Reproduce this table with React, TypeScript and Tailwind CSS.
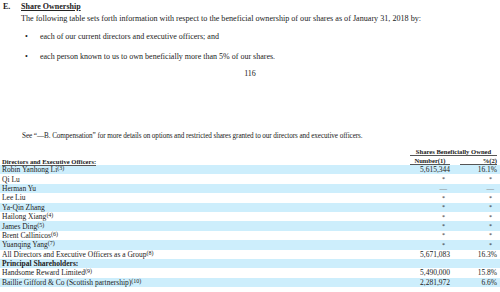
import React from "react";

interface Holder {
  name: string;
  note?: string;
  number: string;
  percent: string;
  bold?: boolean;
}

const holders: Holder[] = [
  { name: "Robin Yanhong Li", note: "(3)", number: "5,615,344", percent: "16.1%" },
  { name: "Qi Lu", number: "*", percent: "*" },
  { name: "Herman Yu", number: "—", percent: "—" },
  { name: "Lee Liu", number: "*", percent: "*" },
  { name: "Ya-Qin Zhang", number: "*", percent: "*" },
  { name: "Hailong Xiang", note: "(4)", number: "*", percent: "*" },
  { name: "James Ding", note: "(5)", number: "*", percent: "*" },
  { name: "Brent Callinicos", note: "(6)", number: "*", percent: "*" },
  { name: "Yuanqing Yang", note: "(7)", number: "*", percent: "*" },
  { name: "All Directors and Executive Officers as a Group", note: "(8)", number: "5,671,083", percent: "16.3%" },
  { name: "Principal Shareholders:", number: "", percent: "", bold: true },
  { name: "Handsome Reward Limited", note: "(9)", number: "5,490,000", percent: "15.8%" },
  { name: "Baillie Gifford & Co (Scottish partnership)", note: "(10)", number: "2,281,972", percent: "6.6%" },
];

function Cell({ value }: { value: string }) {
  if (value === "*") return <span className="pr-[5px] text-[6px]">*</span>;
  if (value === "—") return <span className="pr-[3px] text-[#777]">—</span>;
  return <span>{value}</span>;
}

export default function App(): React.ReactElement {
  return (
    <div className="w-[500px] h-[292px] overflow-hidden bg-white text-[#222] font-['Liberation_Serif',serif]">
      <div className="flex items-center h-[14px] text-[8px] font-bold">
        <span className="w-[21px] pl-[3px]">E.</span>
        <span className="underline">Share Ownership</span>
      </div>
      <p className="pl-[21px] text-[8.15px] leading-[12px] mt-[-1px]">
        The following table sets forth information with respect to the beneficial ownership of our shares as of January 31, 2018 by:
      </p>
      <ul className="text-[8px] leading-[12px] mt-[6px] flex flex-col gap-[8px]">
        <li className="flex">
          <span className="w-[40px] pl-[25px]">•</span>
          <span>each of our current directors and executive officers; and</span>
        </li>
        <li className="flex">
          <span className="w-[40px] pl-[25px]">•</span>
          <span>each person known to us to own beneficially more than 5% of our shares.</span>
        </li>
      </ul>
      <div className="text-center text-[8px] leading-[12px] mt-[5px]">116</div>
      <p className="pl-[22px] text-[7.2px] tracking-[-0.09px] leading-[12px] mt-[50px]">
        See “—B. Compensation” for more details on options and restricted shares granted to our directors and executive officers.
      </p>

      <div className="mt-[6px]">
        <div className="flex justify-end pr-[3px] h-[8px]">
          <div className="w-[87px] border-b border-[#555] text-center text-[6.6px] font-bold leading-[7px]">
            Shares Beneficially Owned
          </div>
        </div>
        <div className="flex items-end h-[9px] pr-[3px] text-[6.6px] font-bold leading-[7px]">
          <div className="flex-1 pl-[2px]">
            <span className="border-b border-[#555]">Directors and Executive Officers:</span>
          </div>
          <div className="w-[40px] border-b border-[#555] text-center">Number(1)</div>
          <div className="w-[10px]" />
          <div className="w-[37px] border-b border-[#555] text-right">%(2)</div>
        </div>
        <div>
          {holders.map((h, i) => (
            <div
              key={h.name}
              className={`flex items-center h-[9.4px] pr-[3px] text-[7.5px] leading-[9px] ${i % 2 === 0 ? "bg-[#cdeefc]" : "bg-white"}`}
            >
              <div className={`flex-1 pl-[2px] ${h.bold ? "font-bold" : ""}`}>
                {h.name}
                {h.note && <span className="text-[6px] align-top leading-[6px]">{h.note}</span>}
              </div>
              <div className="w-[40px] text-right">
                <Cell value={h.number} />
              </div>
              <div className="w-[10px]" />
              <div className="w-[37px] text-right">
                <Cell value={h.percent} />
              </div>
            </div>
          ))}
        </div>
      </div>
    </div>
  );
}
